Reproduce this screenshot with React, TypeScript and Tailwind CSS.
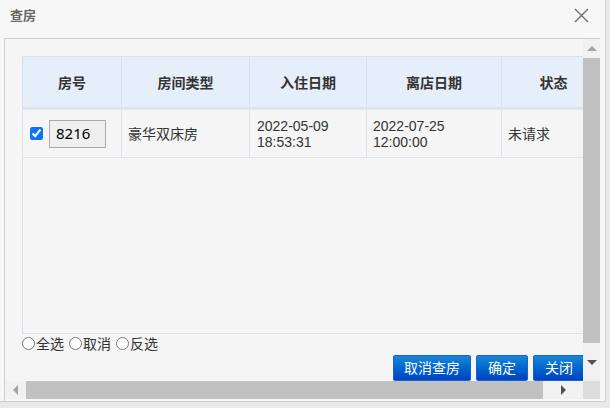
import React from 'react'

const font = { fontFamily: '"Noto Sans", "Noto Sans CJK SC", sans-serif' }

const cols = [
  { title: '房号', w: 'w-[99px]' },
  { title: '房间类型', w: 'w-[128px]' },
  { title: '入住日期', w: 'w-[117px]' },
  { title: '离店日期', w: 'w-[135px]' },
  { title: '状态', w: 'w-[104px]' },
]

const Tri = ({ dir }: { dir: 'up' | 'down' | 'left' | 'right' }) => {
  const pts = {
    up: '0,5 5,0 10,5',
    down: '0,0 10,0 5,5',
    left: '5,0 5,10 0,5',
    right: '0,0 0,10 5,5',
  }[dir]
  const big = dir === 'down' || dir === 'right'
  const vertical = dir === 'up' || dir === 'down'
  return (
    <svg width={vertical ? 10 : 5} height={vertical ? 5 : 10} viewBox={vertical ? '0 0 10 5' : '0 0 5 10'}>
      <polygon points={pts} fill={big ? '#505050' : '#a3a3a3'} />
    </svg>
  )
}

const Btn = ({ children, w }: { children: React.ReactNode; w: string }) => (
  <button
    className={`${w} h-[26px] rounded-[2px] border border-[#1467c4] bg-gradient-to-b from-[#1b86d8] to-[#0041c4] text-white text-[14px] leading-none shrink-0`}
  >
    {children}
  </button>
)

const Radio = ({ label }: { label: string }) => (
  <label className="flex items-center text-[14px] text-[#333] leading-none mr-[5px]">
    <input type="radio" name="sel" className="w-[13px] h-[13px] m-0" />
    <span className="ml-[1px]">{label}</span>
  </label>
)

const DateCell = ({ d, t }: { d: string; t: string }) => (
  <div className="font-['Liberation_Sans',sans-serif] text-[14px] leading-[16px]">
    <div>{d}</div>
    <div>{t}</div>
  </div>
)

export default function App() {
  return (
    <div className="w-[610px] h-[408px] bg-[#e9e9e9] overflow-hidden" style={font}>
      <div className="w-[606px] h-[402px] bg-[#f7f7f7] border-r border-b border-[#cfcfcf] flex flex-col">
        {/* title */}
        <div className="h-[38px] shrink-0 flex items-start justify-between pl-[10px] pr-[16px] pt-[6px]">
          <span className="text-[13px] font-bold text-[#666] leading-[18px]">查房</span>
          <svg width="15" height="15" viewBox="0 0 15 15" className="mt-[2px]">
            <path d="M1 1 L14 14 M14 1 L1 14" stroke="#6f6f6f" strokeWidth="1.4" />
          </svg>
        </div>

        {/* body */}
        <div className="flex-1 ml-[4px] mr-[5px] flex flex-col border-t border-l border-[#cfcfcf]">
          <div className="flex flex-1 min-h-0">
            {/* viewport */}
            <div className="flex-1 overflow-hidden bg-[#f5f5f5] pl-[17px] pt-[17px]">
              <div className="w-[583px]">
                <div className="h-[278px] border border-[#d8e0ec] bg-[#f5f5f5]">
                  <table className="border-collapse table-fixed w-[583px] -ml-px -mt-px">
                    <thead>
                      <tr className="h-[52px] bg-[#e6eef9]">
                        {cols.map((c) => (
                          <th
                            key={c.title}
                            className={`${c.w} border border-[#d8e0ec] border-b-[3px] border-b-[#dce5f2] text-[14px] font-bold text-[#333] text-center`}
                          >
                            {c.title}
                          </th>
                        ))}
                      </tr>
                    </thead>
                    <tbody>
                      <tr className="h-[49px] text-[14px] text-[#333]">
                        <td className="border border-[#dde3ec] pl-[7px]">
                          <div className="flex items-center gap-[6px]">
                            <input type="checkbox" defaultChecked className="w-[13px] h-[13px] m-0 accent-[#0b75f5]" />
                            <div className="w-[57px] h-[28px] border border-[#a9a9a9] bg-[#efefef] pl-[6px] flex items-center text-[15px] text-black">
                              8216
                            </div>
                          </div>
                        </td>
                        <td className="border border-[#dde3ec] pl-[6px]">豪华双床房</td>
                        <td className="border border-[#dde3ec] pl-[7px]">
                          <DateCell d="2022-05-09" t="18:53:31" />
                        </td>
                        <td className="border border-[#dde3ec] pl-[6px]">
                          <DateCell d="2022-07-25" t="12:00:00" />
                        </td>
                        <td className="border border-[#dde3ec] pl-[6px]">未请求</td>
                      </tr>
                    </tbody>
                  </table>
                </div>
                <div className="flex items-center h-[17px] mt-[1px]">
                  <Radio label="全选" />
                  <Radio label="取消" />
                  <Radio label="反选" />
                </div>
                <div className="flex justify-end gap-[5px] pr-[20px] mt-[3px]">
                  <Btn w="w-[78px]">取消查房</Btn>
                  <Btn w="w-[52px]">确定</Btn>
                  <Btn w="w-[52px]">关闭</Btn>
                </div>
              </div>
            </div>
            {/* vertical scrollbar */}
            <div className="w-[17px] bg-[#f1f1f1] flex flex-col">
              <div className="h-[19px] flex items-center justify-center">
                <Tri dir="up" />
              </div>
              <div className="h-[285px] bg-[#c1c1c1]" />
              <div className="flex-1 flex items-center justify-center">
                <Tri dir="down" />
              </div>
            </div>
          </div>
          {/* horizontal scrollbar */}
          <div className="h-[18px] flex shrink-0 mb-[2px]">
            <div className="flex-1 bg-[#f1f1f1] flex items-center">
              <div className="w-[21px] flex justify-center">
                <Tri dir="left" />
              </div>
              <div className="w-[517px] h-full bg-[#c1c1c1]" />
              <div className="flex-1 flex justify-center">
                <Tri dir="right" />
              </div>
            </div>
            <div className="w-[17px] bg-[#dcdcdc]" />
          </div>
        </div>
      </div>
    </div>
  )
}
